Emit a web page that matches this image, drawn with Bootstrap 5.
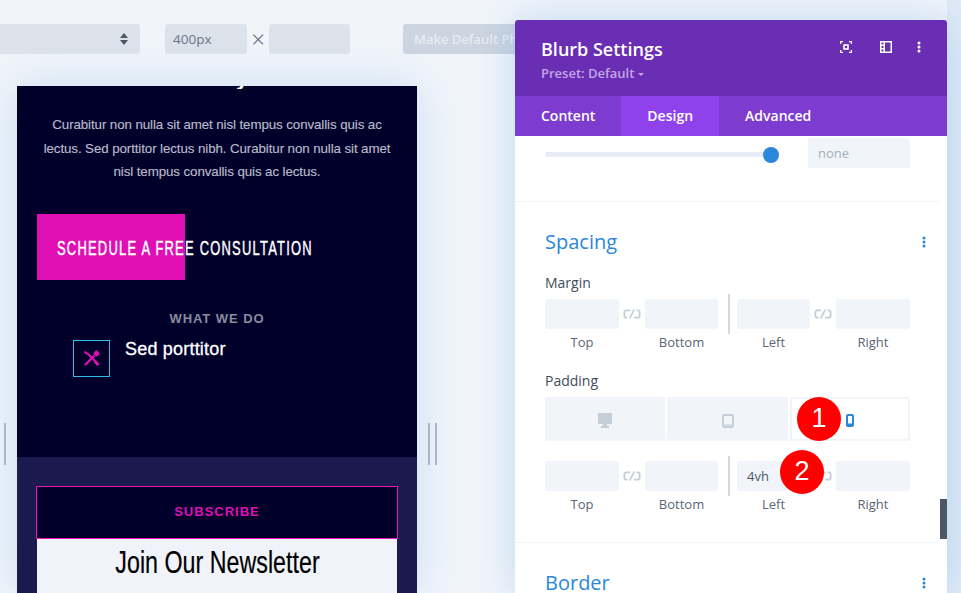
<!DOCTYPE html>
<html lang="en"><head><meta charset="utf-8"><title>Blurb Settings</title>
<link href="https://cdn.jsdelivr.net/npm/bootstrap@5.3.0/dist/css/bootstrap.min.css" rel="stylesheet">
<style>
html,body{height:593px;overflow:hidden}
body{background:#f1f5fa;font-family:"Open Sans",sans-serif;position:relative;width:961px}
.tb{height:86px;padding-top:24px;gap:0}
.tb-sel{width:140px;height:30px;background:#dde3ea;border-radius:0 3px 3px 0;padding-right:12px}
.tb-in{height:30px;background:#dde3ea;border-radius:3px;font-size:13.5px;color:#6b7685;padding:0 8px;line-height:30px}
.tb-w{width:82px;margin-left:25px}.tb-h{width:81px}
.tb-x{width:22px;text-align:center;color:#5f6b7a;font-size:24px;line-height:30px;font-weight:300}
.tb-btn{margin-left:53px;height:30px;width:112px;background:#ccd5e0;border-radius:3px 0 0 3px;color:#e8ecf1;font-weight:600;font-size:13px;line-height:30px;padding-left:11px;white-space:nowrap}
.stage{position:relative;margin-left:17px;width:400px;height:507px;box-shadow:0 0 45px rgba(43,135,218,.2)}
.shd{position:absolute;background:#a9b7c9;width:2px;height:42px;top:423px}
.pv-dark{background:#00002b;height:371px;padding:0 20px;overflow:hidden}
.pv-cut{height:3px;overflow:hidden;padding-left:199px;font:700 22px/1 "Liberation Sans",sans-serif;color:#fff;display:flex;align-items:flex-end}
.pv-txt{margin:24px 0 0;text-align:center;font-family:"Liberation Sans",sans-serif;font-size:13.35px;line-height:23.5px;color:#b9bac8;letter-spacing:-.1px;-webkit-text-stroke:.15px #b9bac8}
.cta{margin-top:30px;width:148px;height:66px;background:#df0fb4;color:#fff;padding-left:20px;line-height:68px;white-space:nowrap;font-family:"Liberation Sans",sans-serif;font-size:21px;letter-spacing:2px;-webkit-text-stroke:.45px #fff}
.cta span,.joinbox span{display:inline-block;transform-origin:0 50%}
.cta span{transform:scaleX(.616)}
.wwd{margin-top:30px;text-align:center;font:700 13px/18px "Liberation Sans",sans-serif;letter-spacing:.95px;color:#8a8a9e}
.blurb{margin:12px 0 0 36px;gap:15px}
.ibox{width:37px;height:37px;border:1px solid #2cbfe9;flex:none}
.btitle{font:400 18px/18px "Liberation Sans",sans-serif;color:#fff;-webkit-text-stroke:.3px #fff;letter-spacing:.2px}
.pv-sec{background:#1a1a4f;height:136px;padding:29px 19px 0}
.subbox{height:53px;background:#00002b;border:1px solid #ec10bb;text-align:center;color:#df0fb4;font:700 13px/50px "Liberation Sans",sans-serif;letter-spacing:1px}
.joinbox{margin:0 1px;background:#f0f4fa;height:54px;text-align:center;color:#000;font-family:"Liberation Sans",sans-serif;font-size:32px;line-height:46px;white-space:nowrap;-webkit-text-stroke:.2px #000}
.joinbox span{transform-origin:50% 50%;transform:scaleX(.727)}
.panel{position:absolute;left:515px;top:20px;width:432px;height:573px;background:#fff;border-radius:3px 3px 0 0;overflow:hidden;box-shadow:0 0 40px rgba(43,135,218,.25)}
.bgr{position:absolute;left:947px;top:0;width:14px;height:593px;background:#e1ebf7}
.p-head{height:76px;background:#6a2eb4;padding:16px 26px 0 26px}
.p-title{font-size:18px;font-weight:600;line-height:26px;color:#fff}
.p-pre{font-size:13px;font-weight:600;color:#c2a7e4;line-height:23px}
.care{display:inline-block;border:3px solid transparent;border-top:3.5px solid #c2a7e4;border-bottom:0;margin-left:4px;vertical-align:2px}
.p-icons{padding-top:5px}
.p-tabs{height:40px;background:#7e3bd0}
.p-tab{padding:0 26px;line-height:40px;font-size:14px;font-weight:600;color:#fff}
.p-tab.on{background:#8f42ec}
.p-body{position:relative;height:457px;overflow:hidden;padding:0 37px 0 30px;color:#4c5866}
.sl-row{height:65px;padding-top:2px}
.track{width:230px;height:5px;background:#e8edf5;border-radius:3px;position:relative;margin-top:14px}
.thumb{position:absolute;right:-4px;top:-5.5px;width:16px;height:16px;border-radius:50%;background:#2b87da}
.fld{height:30px;background:#f1f5f9;border-radius:3px;font-size:13px;line-height:30px;padding-left:10px;color:#a2b0c1}
.sl-f{width:102px;margin-left:33px}
.rule{height:1px;background:#f1f5f9;margin:0 -30px 0 -30px}
.sec-h{font-size:20px;line-height:28px;color:#2b87da;margin-top:26px}
.lbl{font-size:14px;font-weight:500;line-height:20px;color:#414d5a}
.lb-m{margin-top:17px;margin-bottom:1px}
.lb-p{margin-top:21px;margin-bottom:6px}
.vals{height:40px;align-items:center}
.f1{width:74px}.f2{width:73px}
.lnk{width:26px;text-align:center;line-height:0}
.vsep{width:2px;height:40px;background:#d3d9e1;margin:0 7px 0 10px}
.caps{height:16px;font-size:13px;line-height:16px;text-align:center;color:#5a6675}
.dt{height:44px;background:#fff;gap:2px;border-bottom:2px solid #f1f5f9}
.dt-i{width:120px;display:flex;align-items:center;justify-content:center;background:#f1f5f9;padding-top:5px}
.dt-m{width:121px}
.dt-i.on{background:#fff;border:2px solid #f1f5f9;border-bottom:0;padding-top:3px}
.scr{position:absolute;right:0;top:363px;width:7px;height:40px;background:#4c5866}
.pin{position:absolute;width:44px;height:44px;border-radius:50%;background:#f00;color:#fff;text-align:center;font:400 27px/42px "Liberation Sans",sans-serif}
</style></head>
<body>
<div class="bgr"></div>
<div class="d-flex tb">
  <div class="tb-sel d-flex align-items-center justify-content-end"><svg width="8" height="12" viewBox="0 0 8 12"><path d="M4 0 8 5H0ZM4 12 0 7H8Z" fill="#4c5866"/></svg></div>
  <div class="tb-in tb-w">400px</div><div class="tb-x">×</div><div class="tb-in tb-h"></div>
  <div class="tb-btn">Make Default Ph</div>
</div>
<div class="stage">
  <div class="pv-dark">
    <div class="pv-cut"><span>y</span></div>
    <p class="pv-txt">Curabitur non nulla sit amet nisl tempus convallis quis ac lectus. Sed porttitor lectus nibh. Curabitur non nulla sit amet nisl tempus convallis quis ac lectus.</p>
    <div class="cta"><span>SCHEDULE A FREE CONSULTATION</span></div>
    <div class="wwd">WHAT WE DO</div>
    <div class="d-flex blurb">
      <div class="ibox d-flex align-items-center justify-content-center">
        <svg width="17" height="17" viewBox="0 0 17 17" fill="none" stroke="#df0fb4" stroke-width="2"><path d="M4 3 15 14"/><path d="M1.5 1.5 4 4"/><path d="M12.5 1 10.8 4 13 6.2 16 4.5C16 2 14.5 .5 12.5 1Z" fill="#df0fb4" stroke-width="1"/><path d="M11.5 5.5 2 15" stroke-width="2.4"/><path d="M12 11.5 15.5 15" stroke-width="3"/></svg>
      </div>
      <div class="btitle">Sed porttitor</div>
    </div>
  </div>
  <div class="pv-sec">
    <div class="subbox">SUBSCRIBE</div>
    <div class="joinbox"><span>Join Our Newsletter</span></div>
  </div>
</div>
<div class="shd" style="left:4px"></div><div class="shd" style="left:428px"></div><div class="shd" style="left:435px"></div>
<div class="panel">
  <div class="p-head d-flex justify-content-between">
    <div><div class="p-title">Blurb Settings</div><div class="p-pre">Preset: Default<span class="care"></span></div></div>
    <div class="d-flex align-items-start p-icons">
      <svg width="12" height="12" viewBox="0 0 12 12" fill="none" stroke="#fff" stroke-width="1.2"><path d="M.6 3V.6H3M9 .6h2.4V3M11.4 9v2.4H9M3 11.4H.6V9"/><rect x="3.2" y="3.2" width="5.6" height="5.6" fill="#fff" stroke="none"/><rect x="4.8" y="4.8" width="2.4" height="2.4" fill="#6a2eb4" stroke="none"/></svg>
      <svg width="12" height="12" viewBox="0 0 12 12" style="margin-left:28px"><path fill="#fff" d="M0 0H12V12H0Z"/><path fill="#6a2eb4" d="M5 1.5H10.5V10.5H5ZM1.5 1.5H3.5V3.5H1.5ZM1.5 5H3.5V7H1.5ZM1.5 8.5H3.5V10.5H1.5Z"/></svg>
      <svg width="4" height="12" viewBox="0 0 4 12" style="margin-left:25px"><circle cx="2" cy="2" r="1.5" fill="#fff"/><circle cx="2" cy="6" r="1.5" fill="#fff"/><circle cx="2" cy="10" r="1.5" fill="#fff"/></svg>
    </div>
  </div>
  <div class="p-tabs d-flex">
    <div class="p-tab">Content</div><div class="p-tab on">Design</div><div class="p-tab">Advanced</div>
  </div>
  <div class="p-body">
    <div class="sl-row d-flex"><div class="track"><div class="thumb"></div></div><div class="fld sl-f">none</div></div>
    <div class="rule"></div>
    <div class="d-flex justify-content-between align-items-center sec-h"><span>Spacing</span><svg width="4" height="12" viewBox="0 0 4 12" style="margin-right:-16px"><circle cx="2" cy="2" r="1.5" fill="#2b87da"/><circle cx="2" cy="6" r="1.5" fill="#2b87da"/><circle cx="2" cy="10" r="1.5" fill="#2b87da"/></svg></div>
    <div class="lbl lb-m">Margin</div>
    <div class="d-flex vals">
      <div class="fld f1"></div><div class="lnk"><svg width="18" height="10" viewBox="0 0 18 10" fill="none" stroke="#c5ced9" stroke-width="1.8"><path d="M7 1.4H3A1.6 1.6 0 0 0 1.4 3V7A1.6 1.6 0 0 0 3 8.6H4.5M6.8 9.4 11.2.6M13.5 1.4H15A1.6 1.6 0 0 1 16.6 3V7A1.6 1.6 0 0 1 15 8.6H11"/></svg></div><div class="fld f2"></div>
      <div class="vsep"></div>
      <div class="fld f2"></div><div class="lnk"><svg width="18" height="10" viewBox="0 0 18 10" fill="none" stroke="#c5ced9" stroke-width="1.8"><path d="M7 1.4H3A1.6 1.6 0 0 0 1.4 3V7A1.6 1.6 0 0 0 3 8.6H4.5M6.8 9.4 11.2.6M13.5 1.4H15A1.6 1.6 0 0 1 16.6 3V7A1.6 1.6 0 0 1 15 8.6H11"/></svg></div><div class="fld f1"></div>
    </div>
    <div class="d-flex caps"><div class="f1">Top</div><div class="lnk"></div><div class="f2">Bottom</div><div style="width:19px"></div><div class="f2">Left</div><div class="lnk"></div><div class="f1">Right</div></div>
    <div class="lbl lb-p">Padding</div>
    <div class="d-flex dt">
      <div class="dt-i"><svg width="14" height="15" viewBox="0 0 14 15"><path fill="#c5ced9" d="M0 0H14V11H9V13H11V15H3V13H5V11H0Z"/></svg></div>
      <div class="dt-i dt-m"><svg width="12" height="14" viewBox="0 0 12 14"><rect x="1" y="1" width="10" height="12" rx="1" fill="none" stroke="#c5ced9" stroke-width="2"/><rect x="2" y="10.5" width="8" height="1" fill="#c5ced9"/></svg></div>
      <div class="dt-i on"><svg width="8" height="13" viewBox="0 0 8 13"><rect x="1" y="1" width="6" height="11" rx="1" fill="none" stroke="#2b87da" stroke-width="2"/><rect x="1" y="9.5" width="6" height="2.5" fill="#2b87da"/></svg></div>
    </div>
    <div class="d-flex vals" style="margin-top:15px">
      <div class="fld f1"></div><div class="lnk"><svg width="18" height="10" viewBox="0 0 18 10" fill="none" stroke="#c5ced9" stroke-width="1.8"><path d="M7 1.4H3A1.6 1.6 0 0 0 1.4 3V7A1.6 1.6 0 0 0 3 8.6H4.5M6.8 9.4 11.2.6M13.5 1.4H15A1.6 1.6 0 0 1 16.6 3V7A1.6 1.6 0 0 1 15 8.6H11"/></svg></div><div class="fld f2"></div>
      <div class="vsep"></div>
      <div class="fld f2" style="color:#4c5866">4vh</div><div class="lnk"><svg width="18" height="10" viewBox="0 0 18 10" fill="none" stroke="#c5ced9" stroke-width="1.8"><path d="M7 1.4H3A1.6 1.6 0 0 0 1.4 3V7A1.6 1.6 0 0 0 3 8.6H4.5M6.8 9.4 11.2.6M13.5 1.4H15A1.6 1.6 0 0 1 16.6 3V7A1.6 1.6 0 0 1 15 8.6H11"/></svg></div><div class="fld f1"></div>
    </div>
    <div class="d-flex caps"><div class="f1">Top</div><div class="lnk"></div><div class="f2">Bottom</div><div style="width:19px"></div><div class="f2">Left</div><div class="lnk"></div><div class="f1">Right</div></div>
    <div class="rule" style="margin-top:30px"></div>
    <div class="d-flex justify-content-between align-items-center sec-h"><span>Border</span><svg width="4" height="12" viewBox="0 0 4 12" style="margin-right:-16px"><circle cx="2" cy="2" r="1.5" fill="#2b87da"/><circle cx="2" cy="6" r="1.5" fill="#2b87da"/><circle cx="2" cy="10" r="1.5" fill="#2b87da"/></svg></div>
    <div class="scr"></div>
  </div>
</div>
<div class="pin" style="left:797px;top:397px">1</div>
<div class="pin" style="left:780px;top:450px">2</div>
<script src="https://cdn.jsdelivr.net/npm/bootstrap@5.3.0/dist/js/bootstrap.bundle.min.js"></script>
</body></html>
